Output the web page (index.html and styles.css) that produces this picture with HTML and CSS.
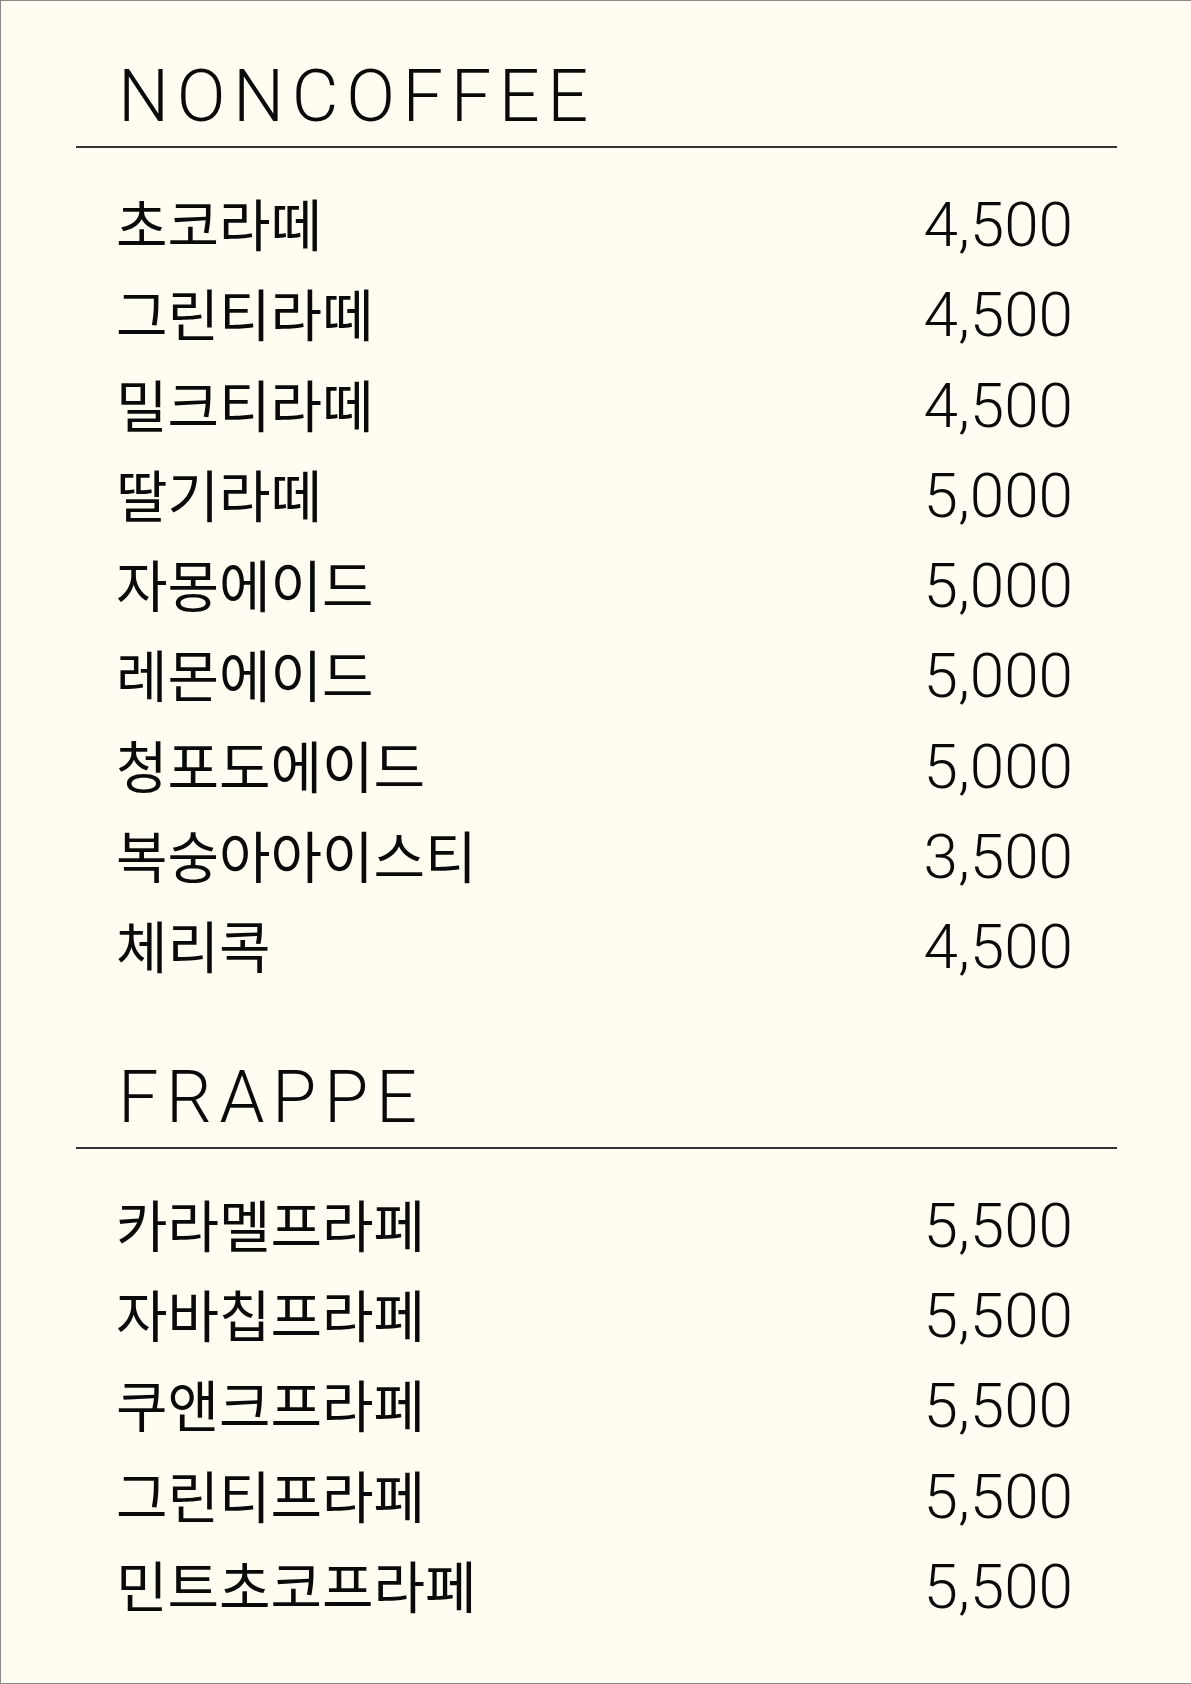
FILE: index.html
```html
<!DOCTYPE html>
<html lang="ko">
<head>
<meta charset="utf-8">
<title>Menu</title>
<link rel="stylesheet" href="styles.css">
</head>
<body>
<div class="menu">
  <section class="section">
    <h2 class="heading">NONCOFFEE</h2>
    <ul class="items">
      <li class="row"><span class="name">초코라떼</span><span class="price">4,500</span></li>
      <li class="row"><span class="name">그린티라떼</span><span class="price">4,500</span></li>
      <li class="row"><span class="name">밀크티라떼</span><span class="price">4,500</span></li>
      <li class="row"><span class="name">딸기라떼</span><span class="price">5,000</span></li>
      <li class="row"><span class="name">자몽에이드</span><span class="price">5,000</span></li>
      <li class="row"><span class="name">레몬에이드</span><span class="price">5,000</span></li>
      <li class="row"><span class="name">청포도에이드</span><span class="price">5,000</span></li>
      <li class="row"><span class="name">복숭아아이스티</span><span class="price">3,500</span></li>
      <li class="row"><span class="name">체리콕</span><span class="price">4,500</span></li>
    </ul>
  </section>
  <section class="section section-next">
    <h2 class="heading">FRAPPE</h2>
    <ul class="items">
      <li class="row"><span class="name">카라멜프라페</span><span class="price">5,500</span></li>
      <li class="row"><span class="name">자바칩프라페</span><span class="price">5,500</span></li>
      <li class="row"><span class="name">쿠앤크프라페</span><span class="price">5,500</span></li>
      <li class="row"><span class="name">그린티프라페</span><span class="price">5,500</span></li>
      <li class="row"><span class="name">민트초코프라페</span><span class="price">5,500</span></li>
    </ul>
  </section>
</div>
</body>
</html>
```

FILE: styles.css
```css
* {
  box-sizing: border-box;
}

html, body {
  margin: 0;
  padding: 0;
  background: #fffdf1;
}

.menu {
  width: 1191px;
  height: 1684px;
  background: #fffdf1;
  border-left: 1px solid #8a8a8a;
  border-top: 1px solid #8a8a8a;
  border-bottom: 1px solid #8a8a8a;
  padding: 60px 74px 0 75px;
  color: #0a0a0a;
  font-family: Roboto, "Noto Sans CJK KR", sans-serif;
}

.section-next {
  margin-top: 72px;
}

.heading {
  margin: 0;
  padding: 0 0 13px 42px;
  font-family: Roboto, "Noto Sans CJK KR", sans-serif;
  font-weight: 300;
  font-size: 72px;
  line-height: 72px;
  letter-spacing: 7.6px;
  border-bottom: 2px solid #333;
}

.items {
  list-style: none;
  margin: 29px 0 0 0;
  padding: 0 44px 0 40px;
}

.row {
  display: flex;
  justify-content: space-between;
  align-items: baseline;
  height: 90.3px;
}

.name {
  font-family: "Noto Sans CJK KR", sans-serif;
  font-weight: 400;
  font-size: 56px;
  line-height: 90px;
}

.price {
  font-family: Roboto, sans-serif;
  font-weight: 300;
  font-size: 62px;
  line-height: 90px;
}
```
